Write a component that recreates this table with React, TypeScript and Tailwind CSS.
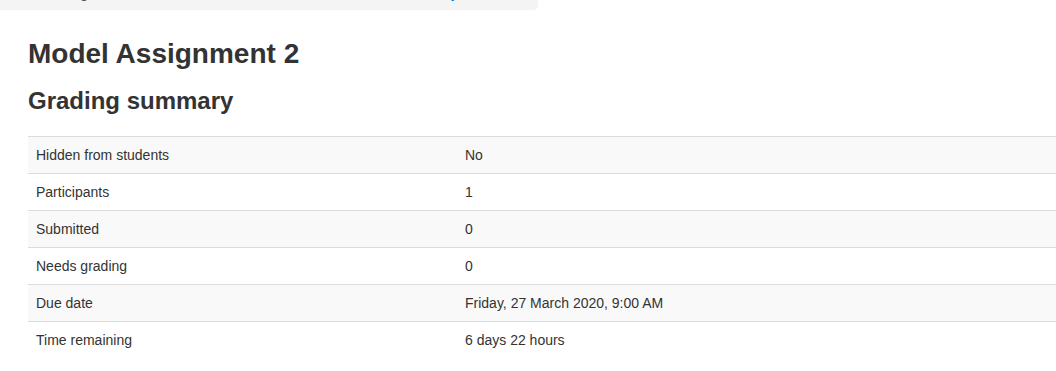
const rows: [string, string][] = [
  ['Hidden from students', 'No'],
  ['Participants', '1'],
  ['Submitted', '0'],
  ['Needs grading', '0'],
  ['Due date', 'Friday, 27 March 2020, 9:00 AM'],
  ['Time remaining', '6 days 22 hours'],
];

export default function App() {
  return (
    <div className="min-h-screen w-[1056px] overflow-hidden bg-white font-['Liberation_Sans',Arial,sans-serif] text-[#333]">
      {/* tail of the activity dates box above */}
      <div className="relative h-[10px] w-[538px] overflow-hidden rounded-br-[5px] bg-[#f4f4f4]">
        <span className="absolute left-[80px] top-[-17px] text-[15px] leading-[20px] text-[#555]">g</span>
        <span className="absolute left-[451px] top-[-17px] text-[15px] leading-[20px] text-[#1177d1]">y</span>
      </div>

      <div className="pl-[28px]">
        <h2 className="mt-[27px] text-[28px] font-bold leading-[34px] text-[#333]">Model Assignment 2</h2>
        <h3 className="mt-[16px] text-[24px] font-bold leading-[28px] text-[#333]">Grading summary</h3>

        <table className="mt-[21px] w-[1100px] border-collapse text-[14px] text-[#333]">
          <tbody>
            {rows.map(([label, value], index) => (
              <tr
                key={label}
                className={`h-[37px] border-t border-[#dcdcdc] ${index % 2 === 0 ? 'bg-[#f9f9f9]' : 'bg-white'}`}
              >
                <td className="w-[437px] px-[8px] align-middle">{label}</td>
                <td className="px-0 align-middle">{value}</td>
              </tr>
            ))}
          </tbody>
        </table>
      </div>
    </div>
  );
}
